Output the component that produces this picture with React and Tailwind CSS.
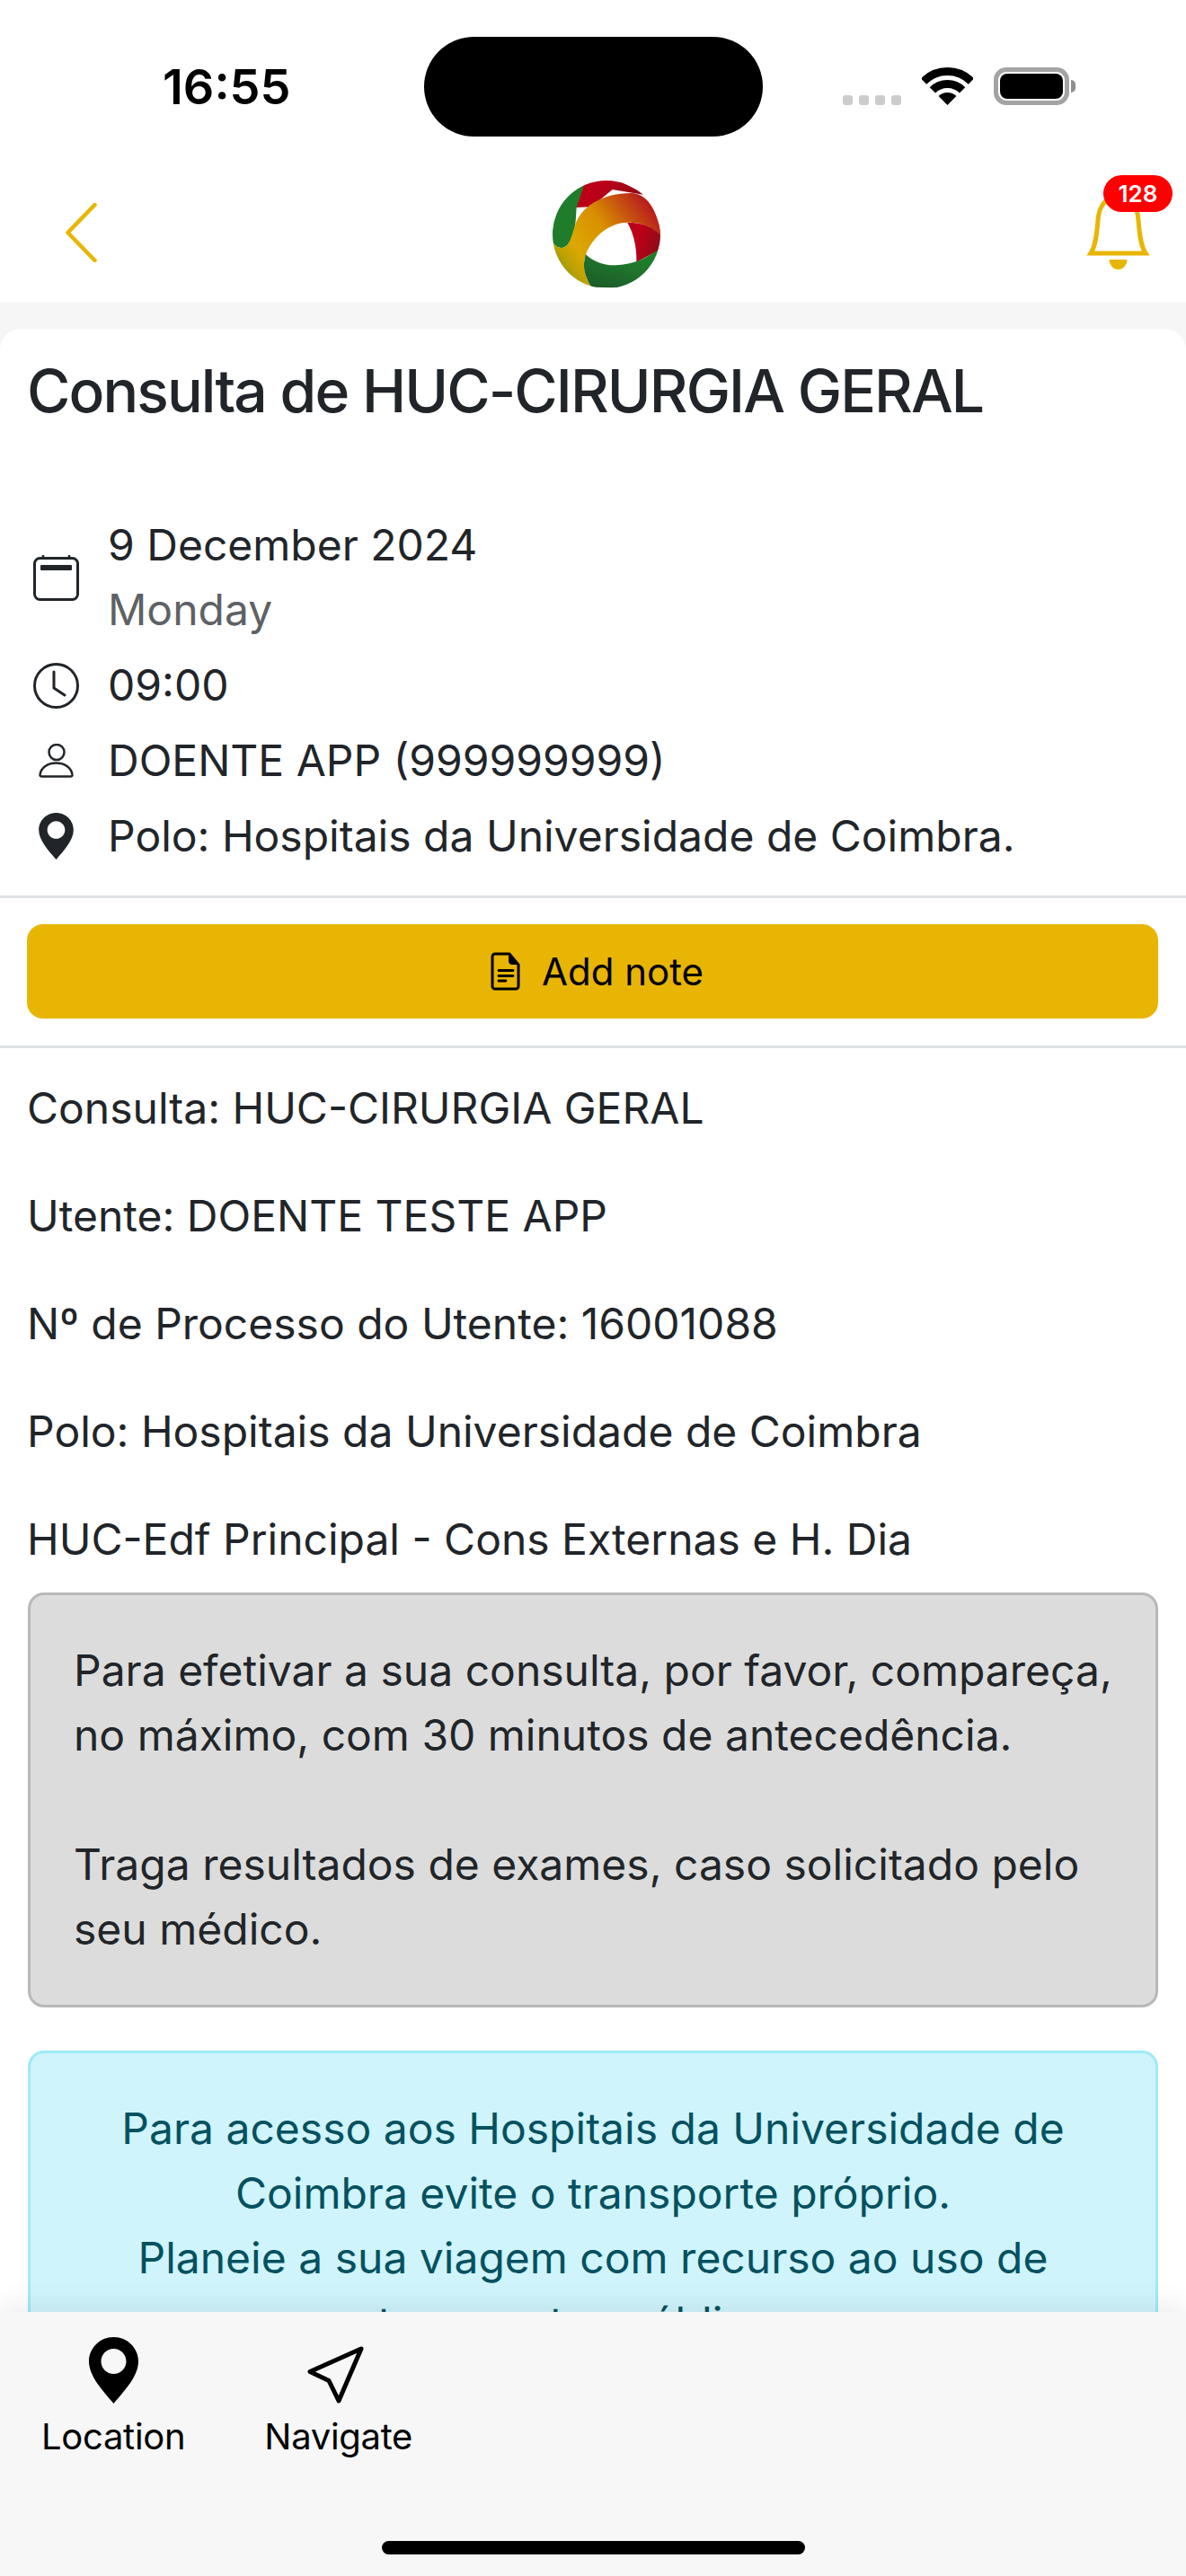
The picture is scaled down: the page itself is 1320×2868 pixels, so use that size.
const Wifi = () => (
  <svg width="57" height="42" viewBox="0 0 57 42">
    <path d="M2 15.5A37.5 37.5 0 0 1 55 15.5" fill="none" stroke="#000" strokeWidth="9" />
    <path d="M11.9 25.4A23.5 23.5 0 0 1 45.1 25.4" fill="none" stroke="#000" strokeWidth="9" />
    <path d="M28.5 42L18.6 32.1A14 14 0 0 1 38.4 32.1Z" fill="#000" />
  </svg>
);

const Logo = () => (
  <svg width="120" height="120" viewBox="0 0 360 360">
    <defs>
      <clipPath id="disc"><circle cx="180" cy="180" r="180" /></clipPath>
      <linearGradient id="band" x1="0" y1="0.95" x2="1" y2="0.3">
        <stop offset="0" stopColor="#4f8a1e" />
        <stop offset="0.18" stopColor="#b5a006" />
        <stop offset="0.32" stopColor="#dca800" />
        <stop offset="0.6" stopColor="#d89000" />
        <stop offset="1" stopColor="#b81c1c" />
      </linearGradient>
      <linearGradient id="red" x1="0" y1="0" x2="1" y2="0.3">
        <stop offset="0.4" stopColor="#bb0018" />
        <stop offset="1" stopColor="#8f0c18" />
      </linearGradient>
      <linearGradient id="green" x1="0.1" y1="1" x2="0.6" y2="0.2">
        <stop offset="0" stopColor="#1c5a2a" />
        <stop offset="1" stopColor="#1f7c2a" />
      </linearGradient>
    </defs>
    <g clipPath="url(#disc)">
      <path d="M105 10L78 90L130 88L200 30L320 50L200 -10Z" fill="url(#red)" />
      <path d="M105 15L80 90C78 115 78 135 75 150C68 185 55 225 30 225C15 225 5 215 0 205L-5 60Z" fill="#1f7c2a" />
      <path d="M0 205C5 215 15 225 30 225C55 225 62 190 75 150C95 85 170 42 260 42C300 42 345 70 365 190L360 190C340 155 300 140 250 140C175 140 110 215 105 275C104 305 115 335 130 356L60 330L0 240Z" fill="url(#band)" />
      <path d="M250 141C300 140 340 155 365 190L352 235L280 272C282 225 270 175 250 141Z" fill="url(#red)" />
      <path d="M110 246C135 270 170 284 210 283C265 282 310 262 352 232L360 240L300 360L130 356C113 330 103 300 105 275Z" fill="url(#green)" />
    </g>
  </svg>
);

const Pin = ({ className, fill }) => (
  <svg className={className} viewBox="0 0 55 74">
    <path
      fillRule="evenodd"
      fill={fill}
      d="M27.5 0C12.3 0 0 12.100 0 27C0 44 16 60 27.500 74C39 60 55 44 55 27C55 12.100 42.700 0 27.500 0ZM27.500 13C35.200 13 41.500 19.300 41.500 27C41.500 34.700 35.200 41 27.500 41C19.800 41 13.500 34.700 13.500 27C13.500 19.300 19.800 13 27.500 13Z"
    />
  </svg>
);

const CalendarIcon = () => (
  <svg width="51" height="52" viewBox="0 0 51 52" fill="none">
    <rect x="1.500" y="4.500" width="48" height="46" rx="6" stroke="#212529" strokeWidth="3" />
    <path d="M11 1V5M40 1V5" stroke="#212529" strokeWidth="2.500" />
    <rect x="8" y="12" width="35" height="6" rx="1" fill="#212529" />
  </svg>
);

const ClockIcon = () => (
  <svg width="51" height="51" viewBox="0 0 51 51" fill="none">
    <circle cx="25.500" cy="25.500" r="24" stroke="#212529" strokeWidth="3" />
    <path d="M23 10V28L35 36" stroke="#212529" strokeWidth="3" strokeLinecap="round" strokeLinejoin="round" />
  </svg>
);

const PersonIcon = () => (
  <svg width="39" height="38" viewBox="0 0 39 38" fill="none">
    <circle cx="20" cy="9.500" r="8.500" stroke="#212529" strokeWidth="2.500" />
    <path d="M3 36.500H36C37 36.500 37.700 35.500 37.500 34.500C36.500 27 29.500 21.500 19.500 21.500C9.500 21.500 2.500 27 1.500 34.500C1.300 35.500 2 36.500 3 36.500Z" stroke="#212529" strokeWidth="2.500" />
  </svg>
);

const NoteIcon = () => (
  <svg width="33" height="43" viewBox="0 0 33 43" fill="none">
    <path d="M5 2H21L31 14V38C31 39.700 29.700 41 28 41H5C3.300 41 2 39.700 2 38V5C2 3.300 3.300 2 5 2Z" stroke="#000" strokeWidth="3" />
    <path d="M20 2V10C20 12.500 22 14 24 14H31Z" fill="#000" />
    <path d="M9 20.500H25M9 26.500H25M9 32H17" stroke="#000" strokeWidth="2.800" strokeLinecap="round" />
  </svg>
);

const infoRows = [
  { icon: <ClockIcon />, text: '09:00' },
  { icon: <PersonIcon />, text: 'DOENTE APP (999999999)' },
  { icon: <Pin className="w-[39px] h-[52px]" fill="#212529" />, text: 'Polo: Hospitais da Universidade de Coimbra.' },
];

const details = [
  'Consulta: HUC-CIRURGIA GERAL',
  'Utente: DOENTE TESTE APP',
  'Nº de Processo do Utente: 16001088',
  'Polo: Hospitais da Universidade de Coimbra',
  'HUC-Edf Principal - Cons Externas e H. Dia',
];

const App = () => {
  return (
    <div className="w-[1320px] h-[2868px] overflow-hidden flex flex-col bg-white text-[#212529] font-['Inter',sans-serif]">
      <div className="h-[177px] shrink-0 flex items-start pl-[181px] pt-[41px]">
        <div className="w-[291px] mt-[25px] text-[54px] leading-[62px] font-semibold text-black">16:55</div>
        <div className="w-[377px] h-[111px] rounded-full bg-black" />
        <div className="flex items-end gap-[7px] ml-[89px] mt-[65px]">
          <div className="w-[11px] h-[11px] rounded-[3px] bg-[#cccccc]" />
          <div className="w-[11px] h-[11px] rounded-[3px] bg-[#cccccc]" />
          <div className="w-[11px] h-[11px] rounded-[3px] bg-[#cccccc]" />
          <div className="w-[11px] h-[11px] rounded-[3px] bg-[#cccccc]" />
        </div>
        <div className="ml-[23px] mt-[34px]"><Wifi /></div>
        <div className="flex items-center ml-[23px] mt-[34px]">
          <div className="w-[84px] h-[42px] rounded-[14px] border-[5px] border-[#a3a3a3] p-[2px]">
            <div className="w-full h-full rounded-[8px] bg-black" />
          </div>
          <div className="w-[5px] h-[14px] rounded-r-full bg-[#8e8e8e] ml-[2px]" />
        </div>
      </div>

      <div className="h-[159px] shrink-0 flex items-center pl-[73px] pr-[40px] pt-[8px]">
        <svg className="mb-[3px]" width="35" height="66" viewBox="0 0 35 66" fill="none">
          <path d="M32.500 2L2.500 33L32.500 64" stroke="#e8b504" strokeWidth="4.500" strokeLinecap="round" strokeLinejoin="round" />
        </svg>
        <div className="ml-[507px]"><Logo /></div>
        <div className="relative ml-auto mb-[6px] w-[71px] h-[85px]">
          <svg width="71" height="85" viewBox="0 0 71 85" fill="none">
            <path d="M5 67H66C60 58 59 42 58 30C57 14 48 3 35.500 3C23 3 14 14 13 30C12 42 11 58 5 67Z" stroke="#e8b504" strokeWidth="5" />
            <path d="M25.500 74H45.500A10 11 0 0 1 25.500 74Z" fill="#e8b504" />
          </svg>
          <div className="absolute top-[-20px] left-[19px] w-[77px] h-[41px] rounded-full bg-[#ff0000] text-white text-[26px] leading-[41px] font-semibold text-center">128</div>
        </div>
      </div>

      <div className="flex-1 min-h-0 overflow-hidden bg-[#f6f6f6] pt-[30px]">
        <div className="h-full rounded-t-[24px] bg-white pt-[33px] text-[48px] leading-[72px]">
          <h1 className="pl-[30px] text-[66px] leading-[72px] font-medium tracking-[-1.900px]">Consulta de HUC-CIRURGIA GERAL</h1>

          <div className="mt-[100px] flex items-center pl-[37px]">
            <div className="w-[51px] mr-[32px] flex justify-center"><CalendarIcon /></div>
            <div>
              <div>9 December 2024</div>
              <div className="text-[#5e6165]">Monday</div>
            </div>
          </div>
          {infoRows.map((row) => (
            <div key={row.text} className="mt-[12px] flex items-center pl-[37px]">
              <div className="w-[51px] mr-[32px] flex justify-center">{row.icon}</div>
              <div>{row.text}</div>
            </div>
          ))}

          <div className="mt-[30px] border-t-[3px] border-[#dee2e6]" />
          <div className="mt-[29px] ml-[30px] mr-[31px] h-[105px] pl-[10px] rounded-[18px] bg-[#e8b504] flex items-center justify-center gap-[24px] text-black text-[42px]">
            <NoteIcon />
            <span>Add note</span>
          </div>
          <div className="mt-[30px] border-t-[3px] border-[#dee2e6]" />

          <div className="mt-[31px] pl-[30px]">
            {details.map((line, i) => (
              <p key={line} className={i < details.length - 1 ? 'mb-[48px]' : ''}>{line}</p>
            ))}
          </div>

          <div className="mt-[23px] mx-[31px]">
            <div className="rounded-[18px] border-[3px] border-[#b8b8b8] bg-[#dcdcdc] p-[48px]">
              <p>Para efetivar a sua consulta, por favor, compareça, no máximo, com 30 minutos de antecedência.</p>
              <p className="mt-[72px]">Traga resultados de exames, caso solicitado pelo seu médico.</p>
            </div>

            <div className="mt-[48px] rounded-[18px] border-[3px] border-[#9eeaf9] bg-[#cff4fc] text-[#055160] text-center p-[48px]">
              <p>Para acesso aos Hospitais da Universidade de Coimbra evite o transporte próprio.</p>
              <p>Planeie a sua viagem com recurso ao uso de transportes públicos.</p>
            </div>
          </div>
        </div>
      </div>

      <div className="relative h-[294px] shrink-0 bg-[#f7f7f7] shadow-[0_-6px_30px_rgba(0,0,0,0.08)] flex flex-col pt-[28px] text-black text-[40px] tracking-[-0.3px] leading-[50px]">
        <div className="flex pl-[46px] gap-[88px]">
          <div className="flex flex-col items-center">
            <div className="h-[74px] flex items-end"><Pin className="w-[55px] h-[74px]" fill="#000" /></div>
            <div className="mt-[12px]">Location</div>
          </div>
          <div className="flex flex-col items-center">
            <div className="h-[74px] flex items-end">
              <svg className="mr-[7px]" width="63" height="64" viewBox="0 0 63 64" fill="none">
                <path d="M60 3L3 28.500L24 38.500L35 61Z" stroke="#000" strokeWidth="5" strokeLinejoin="round" />
              </svg>
            </div>
            <div className="mt-[12px]">Navigate</div>
          </div>
        </div>
        <div className="mt-auto mb-[24px] self-center w-[471px] h-[15px] rounded-full bg-black" />
      </div>
    </div>
  );
};

export default App;
